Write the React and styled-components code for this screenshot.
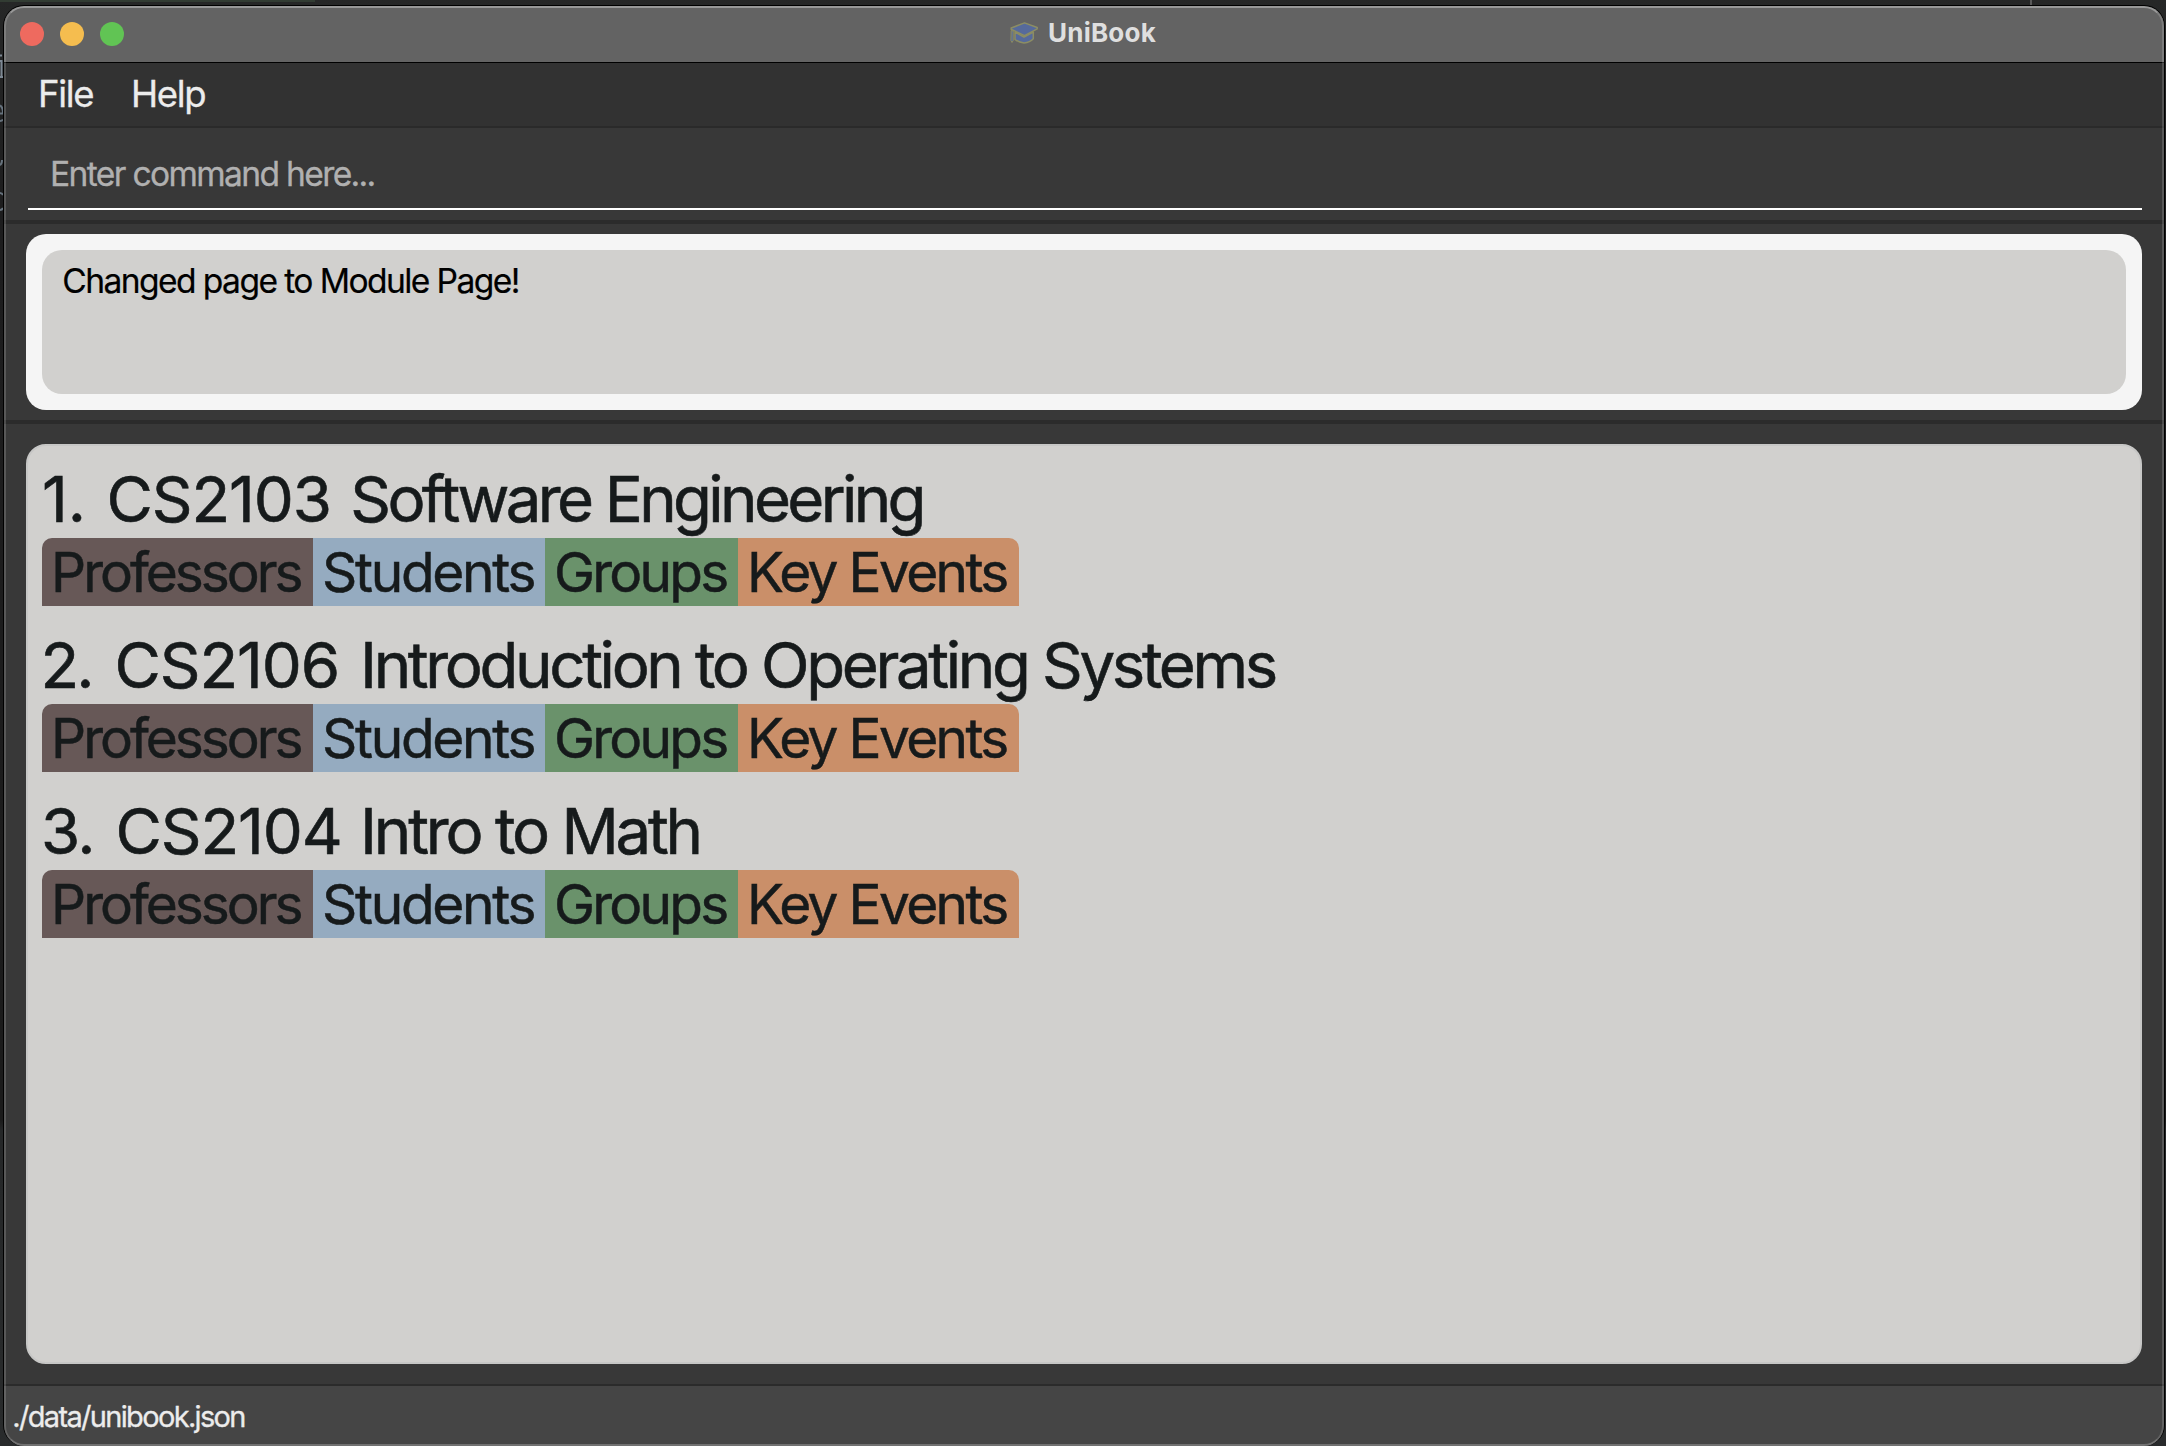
import React from "react";
import styled, { createGlobalStyle } from "styled-components";

const GlobalStyle = createGlobalStyle`
  * { box-sizing: border-box; }
  body {
    margin: 0;
    overflow: hidden;
    background: #242525;
    font-family: Inter, "Liberation Sans", sans-serif;
  }
`;

const Desktop = styled.div`
  position: relative;
  width: 2166px;
  height: 1446px;
  padding: 5px 1px 0 3px;
  overflow: hidden;
  background: linear-gradient(#262727, #1d1d1e 200px, #1b1b1b 1120px, #252728 1130px, #292b2c);
`;

const Backdrop = styled.svg`
  position: absolute;
  left: 0;
  top: 0;
`;

const Window = styled.div`
  position: relative;
  display: flex;
  flex-direction: column;
  height: 1441px;
  border: 1px solid #000;
  border-bottom: 0;
  border-radius: 21px;
  overflow: hidden;
  background: #383838;

  &::after {
    content: "";
    position: absolute;
    inset: 0;
    border: 2px solid rgba(255, 255, 255, 0.16);
    border-top-color: rgba(255, 255, 255, 0.34);
    border-bottom-color: rgba(255, 255, 255, 0.24);
    border-radius: 20px;
    pointer-events: none;
  }
`;

const TitleBar = styled.header`
  display: grid;
  grid-template-columns: 1fr auto 1fr;
  align-items: center;
  height: 57px;
  flex: none;
  padding: 0 16px;
  background: #636363;
  border-bottom: 1px solid #000;
`;

const TrafficLights = styled.div`
  display: flex;
  gap: 16px;
`;

const Light = styled.span`
  width: 24px;
  height: 24px;
  border-radius: 50%;
  background: ${(p) => p.$color};
`;

const WindowTitle = styled.div`
  display: flex;
  align-items: center;
  gap: 10px;
  padding: 0 2px 3px 0;
  color: #dfdfdf;
  font-size: 26px;
  font-weight: 700;
  letter-spacing: 0.2px;
  line-height: 40px;
`;

const MenuBar = styled.nav`
  display: flex;
  gap: 37.7px;
  flex: none;
  height: 65px;
  padding-left: 34px;
  background: #323232;
  border-bottom: 2px solid #2a2a2a;
`;

const MenuItem = styled.span`
  color: #ececec;
  font-size: 36.5px;
  letter-spacing: -1.3px;
  line-height: 63px;
  -webkit-text-stroke: 0.3px currentColor;
`;

const CommandArea = styled.div`
  display: flex;
  flex: none;
  height: 96px;
  padding: 11px 22px 10px 24px;
  border-bottom: 4px solid #2b2b2b;
`;

const CommandInput = styled.input`
  flex: 1;
  height: 71px;
  padding: 0 0 0 22px;
  border: 0;
  border-bottom: 2px solid #fff;
  outline: none;
  background: transparent;
  color: #fff;
  font: 400 33.6px Inter, "Liberation Sans", sans-serif;
  letter-spacing: -1.65px;
  -webkit-text-stroke: 0.3px currentColor;

  &::placeholder {
    color: #b0b0b0;
    opacity: 1;
    -webkit-text-stroke: 0.3px #b0b0b0;
  }
`;

const ResultArea = styled.section`
  display: flex;
  flex: none;
  height: 200px;
  padding: 10px 22px;
  border-bottom: 4px solid #2b2b2b;
`;

const ResultFrame = styled.div`
  display: flex;
  flex: 1;
  padding: 16px;
  border-radius: 20px;
  background: #f5f5f5;
`;

const ResultText = styled.p`
  flex: 1;
  margin: 0;
  padding: 11px 20.3px;
  border-radius: 20px;
  background: #d1d0ce;
  color: #000;
  font-size: 33.6px;
  letter-spacing: -1.59px;
  line-height: 40px;
  -webkit-text-stroke: 0.2px currentColor;
`;

const ListArea = styled.main`
  display: flex;
  flex: 1;
  padding: 20px 22px;
`;

const ModuleList = styled.div`
  display: flex;
  flex: 1;
  flex-direction: column;
  gap: 20px;
  padding: 14px;
  border: 2px solid #c7c7c6;
  border-radius: 20px;
  background: #d1d0ce;
`;

const ModuleTitle = styled.div`
  display: flex;
  height: 78px;
  color: #161a1b;
  font-size: 63.5px;
  line-height: 78px;
  white-space: pre;
  -webkit-text-stroke: 0.6px currentColor;
`;

const Index = styled.span`
  flex: none;
  width: ${(p) => p.$width}px;
  margin-left: ${(p) => p.$shift}px;
  letter-spacing: ${(p) => p.$tracking}px;
`;

const Code = styled.span`
  flex: none;
  width: ${(p) => p.$width}px;
  letter-spacing: -1.1px;
`;

const Name = styled.span`
  letter-spacing: ${(p) => p.$tracking}px;
`;

const Tabs = styled.div`
  display: flex;
  width: 977px;
  height: 68px;
  border-radius: 10px 10px 0 0;
  overflow: hidden;
`;

const Tab = styled.span`
  flex: none;
  width: ${(p) => p.$width}px;
  padding-left: 9px;
  background: ${(p) => p.$color};
  color: #161a1b;
  font-size: 55px;
  letter-spacing: ${(p) => p.$tracking}px;
  line-height: 68px;
  white-space: nowrap;
  -webkit-text-stroke: 0.5px currentColor;
`;

const StatusBar = styled.footer`
  flex: none;
  height: 62px;
  padding-left: 8.3px;
  border-top: 2px solid #2b2b2b;
  background: #454545;
  color: #ececec;
  font-size: 29px;
  letter-spacing: -1.67px;
  line-height: 61.5px;
  -webkit-text-stroke: 0.3px currentColor;
`;

const LIGHTS = ["#ee6a5f", "#f5bd4f", "#61c454"];

const TABS = [
  { label: "Professors", color: "#675857", width: 271, tracking: -3.0 },
  { label: "Students", color: "#95abc0", width: 232, tracking: -2.3 },
  { label: "Groups", color: "#6a926b", width: 193, tracking: -2.75 },
  { label: "Key Events", color: "#ca8f69", width: 281, tracking: -2.65 },
];

const MODULES = [
  { index: "1.", code: "CS2103", name: "Software Engineering", shift: 0, indexWidth: 64.5, codeWidth: 243.8, indexTracking: 0, tracking: -3.65 },
  { index: "2.", code: "CS2106", name: "Introduction to Operating Systems", shift: -1.5, indexWidth: 74, codeWidth: 245.5, indexTracking: -3, tracking: -3.35 },
  { index: "3.", code: "CS2104", name: "Intro to Math", shift: -1, indexWidth: 74.5, codeWidth: 244.5, indexTracking: -1.6, tracking: -3.2 },
];

function GraduationCap() {
  return (
    <svg width="28" height="22" viewBox="0 0 28 22" fill="#566a9b" stroke="#8c8d63" strokeWidth="1.5" strokeLinejoin="round">
      <path d="M5 10v7.500c2.500 2 5.500 3 9 3.500 3.800-.4 7-1.700 9.300-4.200V10L14 15z" />
      <path d="M14.500.9 27.200 5.500v1.300L14.500 13.600 1.200 7.300V6z" />
      <path d="M1.200 8.500.9 18.500l1.100 2 1.200-2V9z" strokeWidth="1" />
    </svg>
  );
}

export default function App() {
  return (
    <Desktop>
      <GlobalStyle />
      <Backdrop width="2166" height="220" fill="none">
        <path d="M0 0h315v2H0z" fill="#323c33" />
        <path d="M2030 0h2v5h-2z" fill="#5a5a5a" />
        <path d="M0 55.500h2M0 61h1.500v15.500M0 77h3" stroke="#7d8894" strokeWidth="2" />
        <path d="M0 105.500q3 1.500 3 8H0M0 121q2 0 3-1.500" stroke="#66727d" strokeWidth="2" />
        <path d="M2 160q0 4-2 5" stroke="#66727d" strokeWidth="2" />
        <path d="M0 193q2 0 3 2M0 210q2 0 3-2" stroke="#66727d" strokeWidth="2" />
      </Backdrop>
      <Window>
        <TitleBar>
          <TrafficLights>
            {LIGHTS.map((c) => (
              <Light key={c} $color={c} />
            ))}
          </TrafficLights>
          <WindowTitle>
            <GraduationCap />
            UniBook
          </WindowTitle>
        </TitleBar>
        <MenuBar>
          <MenuItem>File</MenuItem>
          <MenuItem>Help</MenuItem>
        </MenuBar>
        <CommandArea>
          <CommandInput placeholder="Enter command here..." />
        </CommandArea>
        <ResultArea>
          <ResultFrame>
            <ResultText>Changed page to Module Page!</ResultText>
          </ResultFrame>
        </ResultArea>
        <ListArea>
          <ModuleList>
            {MODULES.map((m) => (
              <div key={m.code}>
                <ModuleTitle>
                  <Index $width={m.indexWidth} $shift={m.shift} $tracking={m.indexTracking}>{m.index}</Index>
                  <Code $width={m.codeWidth}>{m.code}</Code>
                  <Name $tracking={m.tracking}>{m.name}</Name>
                </ModuleTitle>
                <Tabs>
                  {TABS.map((t) => (
                    <Tab key={t.label} $color={t.color} $width={t.width} $tracking={t.tracking}>
                      {t.label}
                    </Tab>
                  ))}
                </Tabs>
              </div>
            ))}
          </ModuleList>
        </ListArea>
        <StatusBar>./data/unibook.json</StatusBar>
      </Window>
    </Desktop>
  );
}
